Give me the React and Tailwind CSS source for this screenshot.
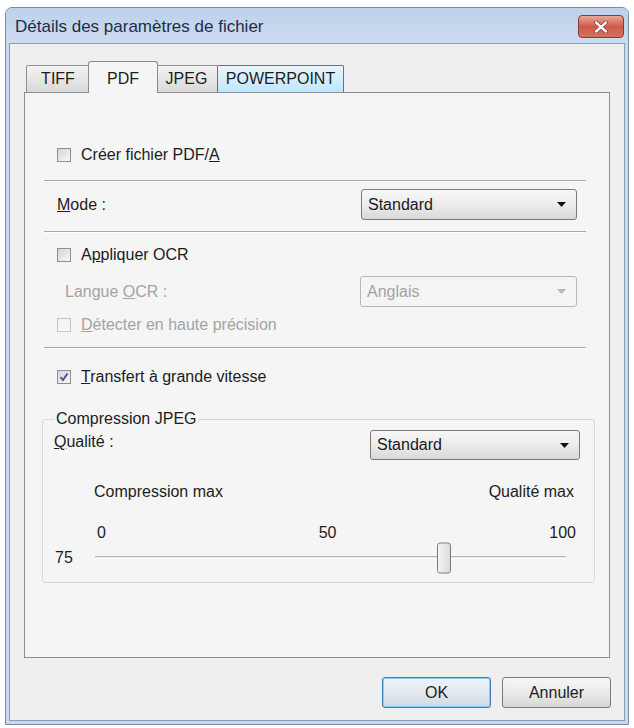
import { useState } from "react";

/* ---------- Small controls ---------- */

const Check = ({ checked, disabled }) => (
  <span
    className={
      disabled
        ? "w-[14px] h-[14px] shrink-0 border border-[#c4c4c4] bg-[#f5f5f5]"
        : "w-[14px] h-[14px] shrink-0 border border-[#8e8f8f] bg-linear-to-br from-[#d4d4d4] to-[#f8f8f8] flex items-center justify-center"
    }
  >
    {checked && (
      <svg width="10" height="10" viewBox="0 0 10 10">
        <path d="M1.5 5.2 L4 8 L8.5 1.5" fill="none" stroke="#3d4f8c" strokeWidth="1.8" />
      </svg>
    )}
  </span>
);

const Arrow = ({ color = "#000" }) => (
  <svg width="9" height="5" viewBox="0 0 9 5">
    <polygon points="0,0 9,0 4.5,5" fill={color} />
  </svg>
);

const Combo = ({ value, width, disabled }) => (
  <div
    className={
      disabled
        ? "h-full rounded-[3px] border border-[#b4b8bc] bg-[#f4f4f4] flex items-center justify-between pl-[6px] pr-[10px] text-[#a3a3a3]"
        : "h-full rounded-[3px] border border-[#7a7a7a] bg-linear-to-b from-[#f7f7f7] via-[#ececec] to-[#d8d8d8] flex items-center justify-between pl-[6px] pr-[10px] text-[#1a1a1a]"
    }
    style={{ width }}
  >
    <span>{value}</span>
    <Arrow color={disabled ? "#b8b8b8" : "#111"} />
  </div>
);

const Separator = () => (
  <div className="h-[2px] border-t border-[#a8a8a8] border-b border-b-white" />
);

const Tab = ({ label, active, hover, w }) => {
  if (active) {
    return (
      <div
        className="relative z-10 -mx-[2px] -mb-px h-[32px] rounded-t-[3px] border border-b-0 border-[#898c95] bg-[#f5f5f5] flex items-center justify-center pt-[3px]"
        style={{ width: w }}
      >
        {label}
      </div>
    );
  }
  return (
    <div
      className={
        hover
          ? "-ml-px h-[27px] rounded-t-[2px] border border-b-0 border-[#3c7fb1] bg-linear-to-b from-[#eaf6fd] to-[#bee6fd] flex items-center justify-center"
          : "-ml-px h-[27px] rounded-t-[2px] border border-b-0 border-[#8e8f8f] bg-linear-to-b from-[#f4f4f4] via-[#e6e6e6] to-[#d9d9d9] flex items-center justify-center"
      }
      style={{ width: w }}
    >
      {label}
    </div>
  );
};

/* ---------- Main ---------- */

const App = () => {
  const [tab] = useState("PDF");

  return (
    <div className="w-[634px] h-[728px] bg-white pt-[7px] pl-[5px] font-['Liberation_Sans',Arial,sans-serif] text-[16px] leading-[18px] text-[#1c1c1c]">
      {/* Window */}
      <div className="w-[624px] h-[718px] rounded-t-[7px] border border-[#7b8ca2] bg-[#c8d9ee] flex flex-col">
        {/* Title bar */}
        <div className="h-[35px] shrink-0 rounded-t-[6px] bg-linear-to-b from-[#bcd1eb] to-[#cddcef] flex items-start justify-between pl-[9px] pr-[4px]">
          <span className="mt-[9px] text-[17px] leading-[20px] text-[#1b2e47]">
            Détails des paramètres de fichier
          </span>
          <button className="mt-[7px] w-[46px] h-[23px] rounded-[4px] border border-[#8a3a30] bg-linear-to-b from-[#e9a898] via-[#cf5a4a] to-[#d8705d] flex items-center justify-center">
            <svg width="14" height="12" viewBox="0 0 14 12">
              <path d="M2 1.5 L12 10.5 M12 1.5 L2 10.5" stroke="#5a2520" strokeWidth="3.6" strokeLinecap="round" />
              <path d="M2 1.5 L12 10.5 M12 1.5 L2 10.5" stroke="#fff" strokeWidth="2.4" strokeLinecap="round" />
            </svg>
          </button>
        </div>

        {/* Body */}
        <div className="mx-[3px] mb-[3px] flex-1 border border-[#8c9db3] bg-[#efefef] pt-[17px] px-[14px] pb-[12px] flex flex-col">
          {/* Tabs */}
          <div className="flex items-end h-[31px] pl-[3px]">
            <Tab label="TIFF" w={64} active={tab === "TIFF"} />
            <Tab label="PDF" w={70} active={tab === "PDF"} />
            <Tab label="JPEG" w={63} active={tab === "JPEG"} />
            <Tab label="POWERPOINT" w={127} hover />
          </div>

          {/* Panel */}
          <div className="h-[566px] border border-[#898c95] bg-[#f5f5f5] pt-[50px] pl-[19px] pr-[23px] flex flex-col">
            <div className="h-[24px] flex items-center gap-[10px] pl-[13px]">
              <Check />
              <span>
                Créer fichier PDF/<span className="underline">A</span>
              </span>
            </div>

            <div className="mt-[13px]">
              <Separator />
            </div>

            <div className="mt-[7px] h-[31px] flex items-center justify-between pl-[13px] pr-[9px]">
              <span>
                <span className="underline">M</span>ode :
              </span>
              <Combo value="Standard" width={216} />
            </div>

            <div className="mt-[11px]">
              <Separator />
            </div>

            <div className="mt-[10px] h-[24px] flex items-center gap-[10px] pl-[13px]">
              <Check />
              <span>
                A<span className="underline">p</span>pliquer OCR
              </span>
            </div>

            <div className="mt-[9px] h-[31px] flex items-center justify-between pl-[21px] pr-[9px] text-[#a3a3a3]">
              <span>
                Langue <span className="underline">O</span>CR :
              </span>
              <Combo value="Anglais" width={217} disabled />
            </div>

            <div className="mt-[6px] h-[24px] flex items-center gap-[10px] pl-[13px] text-[#a3a3a3]">
              <Check disabled />
              <span>
                <span className="underline">D</span>étecter en haute précision
              </span>
            </div>

            <div className="mt-[10px]">
              <Separator />
            </div>

            <div className="mt-[16px] h-[24px] flex items-center gap-[10px] pl-[13px]">
              <Check checked />
              <span>
                <span className="underline">T</span>ransfert à grande vitesse
              </span>
            </div>

            {/* Compression group */}
            <fieldset className="mt-[21px] -ml-[2px] -mr-[9px] rounded-[3px] border border-[#d3d9de] pb-[9px]">
              <legend className="ml-[12px] px-[1px] leading-[18px]">Compression JPEG</legend>

              <div className="pt-[2px] flex items-start justify-between pl-[11px] pr-[14px]">
                <span className="mt-[3px]">
                  <span className="underline">Q</span>ualité :
                </span>
                <div className="h-[30px]">
                  <Combo value="Standard" width={210} />
                </div>
              </div>

              <div className="mt-[23px] flex justify-between pl-[51px] pr-[20px]">
                <span>Compression max</span>
                <span>Qualité max</span>
              </div>

              <div className="mt-[23px] flex justify-between pl-[54px] pr-[18px]">
                <span>0</span>
                <span>50</span>
                <span>100</span>
              </div>

              <div className="h-[31px] flex items-center pl-[12px] pr-[28px]">
                <span className="w-[40px]">75</span>
                <div className="relative flex-1 h-[3px] border-t border-[#b8b8b8] border-b border-b-white bg-[#e6e6e6]">
                  <div className="absolute left-[342px] top-1/2 -translate-y-1/2 w-[14px] h-[31px] rounded-[3px] border border-[#7a7a7a] bg-linear-to-r from-[#f4f4f4] to-[#dcdcdc]" />
                </div>
              </div>
            </fieldset>
          </div>

          {/* Buttons */}
          <div className="mt-[19px] flex justify-end gap-[11px] -mr-px">
            <button className="w-[109px] h-[31px] rounded-[3px] border border-[#3c7fb1] ring-1 ring-inset ring-[#7fd0f7] bg-linear-to-b from-[#eef3f7] via-[#e2e9ef] to-[#cfdae3] text-[#1c1c1c]">
              OK
            </button>
            <button className="w-[109px] h-[31px] rounded-[3px] border border-[#7a7a7a] bg-linear-to-b from-[#f6f6f6] via-[#ebebeb] to-[#d6d6d6] text-[#1c1c1c]">
              Annuler
            </button>
          </div>
        </div>
      </div>
    </div>
  );
};

export default App;
